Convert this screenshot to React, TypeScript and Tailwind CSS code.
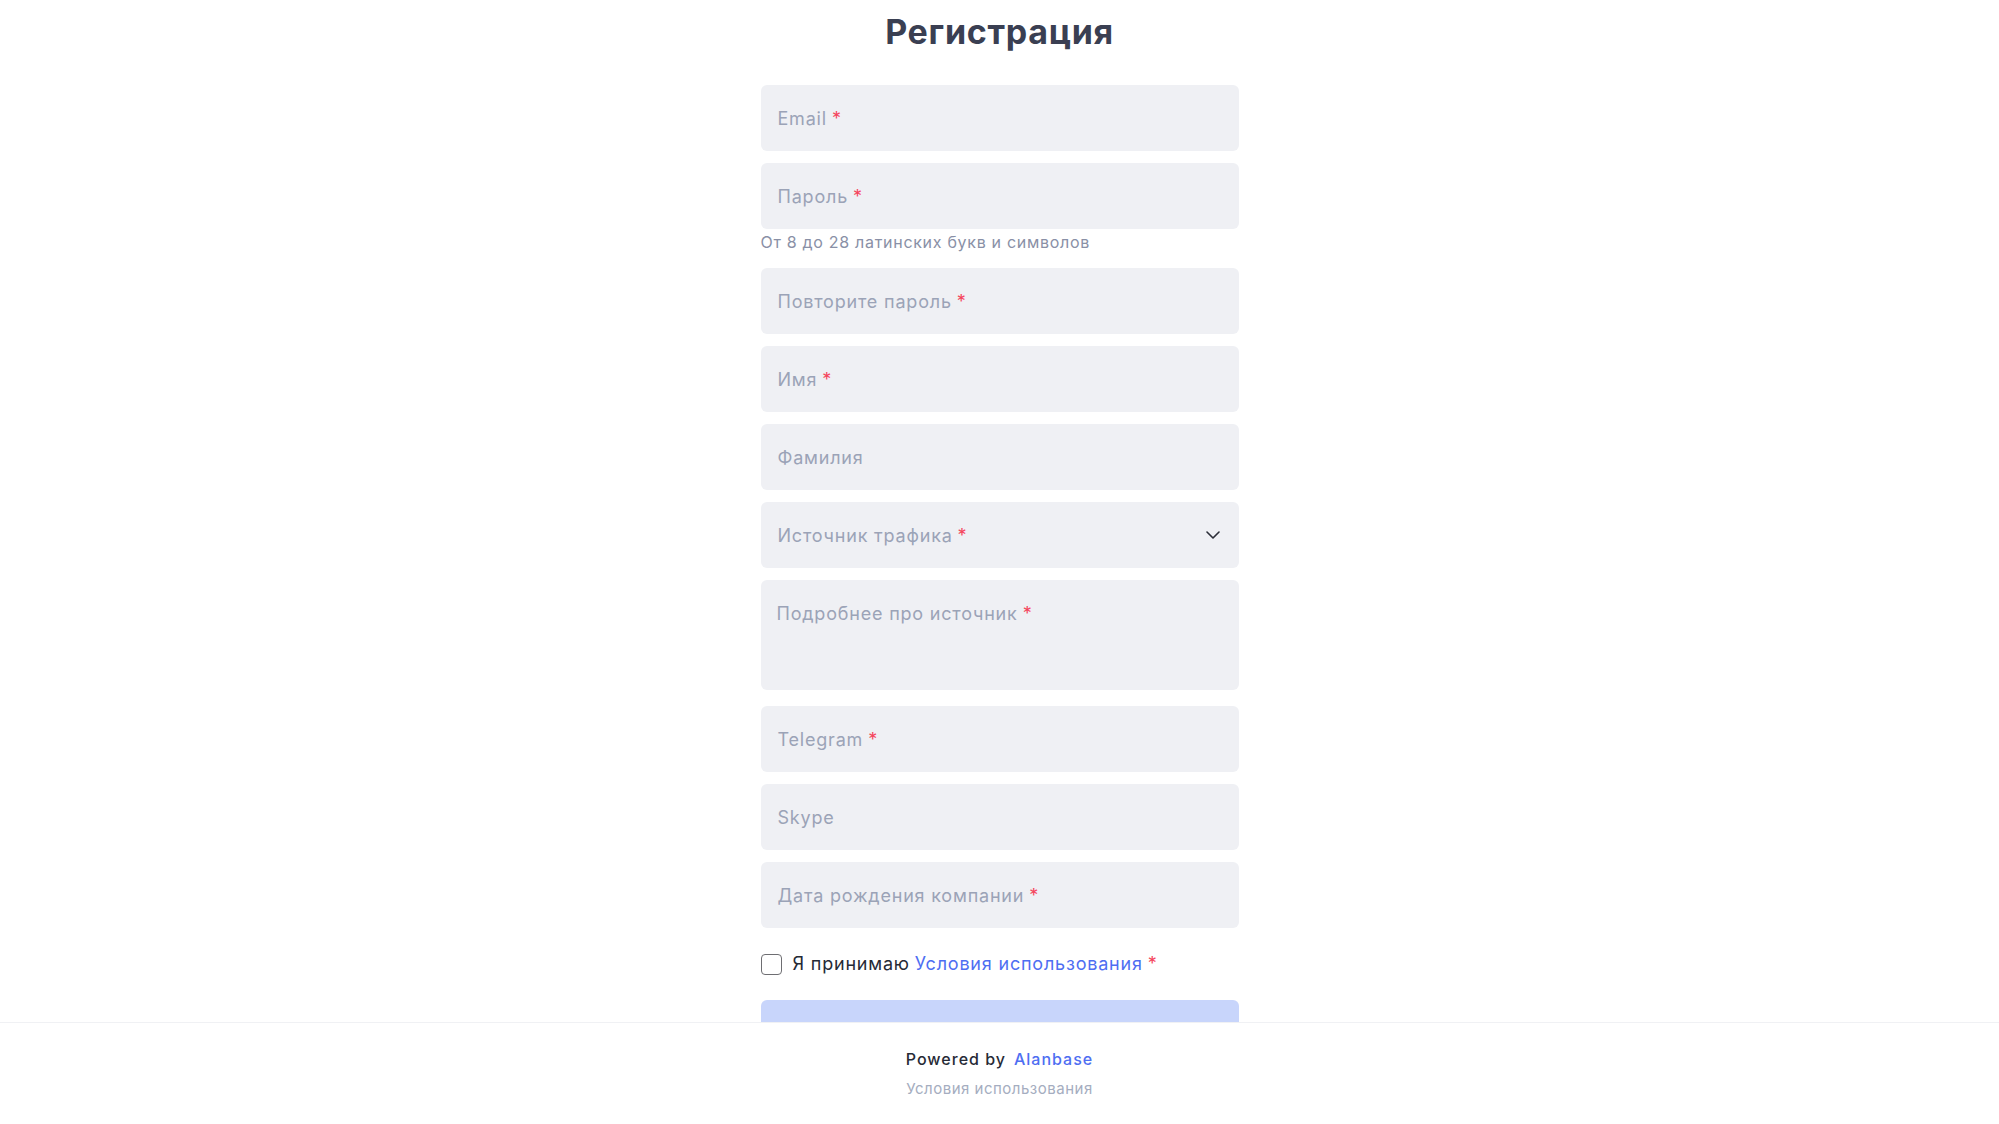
import { useState } from 'react';

const fieldBase =
  'flex w-full items-center rounded-md bg-[#eff0f4] px-[17px] text-[18px] tracking-[0.8px] text-[#9ba3b7]';

function Star() {
  return <span className="ml-[5px] text-[#f5455c]">*</span>;
}

function Field({ label, required, className = '' }: { label: string; required?: boolean; className?: string }) {
  return (
    <div className={`${fieldBase} h-[66px] ${className}`}>
      <span>{label}</span>
      {required && <Star />}
    </div>
  );
}

export default function App() {
  const [agree, setAgree] = useState(false);

  return (
    <div
      className="min-h-screen bg-white pb-[110px]"
      style={{ fontFamily: 'Inter, "Noto Sans", sans-serif' }}
    >
      <div className="mx-auto w-[478px]">
        <h1 className="pt-[10px] text-center text-[34px] font-bold leading-[44px] tracking-[0.7px] text-[#3a3f52]">
          Регистрация
        </h1>

        <form className="mt-[31px] flex flex-col">
          <Field label="Email" required />
          <Field label="Пароль" required className="mt-3" />
          <p className="mt-[3px] text-[16px] leading-5 tracking-[0.7px] text-[#8990a6]">
            От 8 до 28 латинских букв и символов
          </p>
          <Field label="Повторите пароль" required className="mt-4" />
          <Field label="Имя" required className="mt-3" />
          <Field label="Фамилия" className="mt-3" />

          <div className={`${fieldBase} mt-3 h-[66px] justify-between`}>
            <div>
              <span>Источник трафика</span>
              <Star />
            </div>
            <svg width="14" height="8" viewBox="0 0 14 8" fill="none" className="mr-[2px]">
              <path d="M1 1l6 6 6-6" stroke="#2b2e38" strokeWidth="1.6" strokeLinecap="round" strokeLinejoin="round" />
            </svg>
          </div>

          <div className="mt-3 h-[110px] w-full rounded-md bg-[#eff0f4] px-4 pt-[22px] text-[18px] leading-6 tracking-[0.8px] text-[#9ba3b7]">
            <span>Подробнее про источник</span>
            <Star />
          </div>

          <Field label="Telegram" required className="mt-4" />
          <Field label="Skype" className="mt-3" />
          <Field label="Дата рождения компании" required className="mt-3" />

          <label className="mt-[25px] flex cursor-pointer items-center text-[18px] leading-[22px] tracking-[0.8px] text-[#262a36]">
            <input
              type="checkbox"
              checked={agree}
              onChange={(e) => setAgree(e.target.checked)}
              className="peer sr-only"
            />
            <span className="h-[21px] w-[21px] rounded-[4px] border-[1.5px] border-[#6e6e72] bg-white" />
            <span className="ml-[11px]">Я принимаю</span>
            <a href="#" className="ml-[5px] text-[#4e6ef2]">Условия использования</a>
            <Star />
          </label>

          <button
            type="button"
            className="mt-[25px] h-[70px] w-full rounded-md bg-[#c8d5fb] text-[18px] font-semibold text-white"
          >
            Зарегистрироваться
          </button>
        </form>
      </div>

      <footer className="fixed inset-x-0 bottom-0 flex h-[102px] flex-col items-center border-t border-[#f0f1f4] bg-white pt-[26px]">
        <div className="flex items-center text-[16px] leading-5 tracking-[1px]">
          <span className="font-medium text-[#262a36]">Powered by</span>
          <a href="#" className="ml-2 font-medium text-[#4e6ef2]">Alanbase</a>
        </div>
        <a href="#" className="mt-[10px] text-[15px] leading-5 tracking-[0.5px] text-[#a5adc0]">
          Условия использования
        </a>
      </footer>
    </div>
  );
}
